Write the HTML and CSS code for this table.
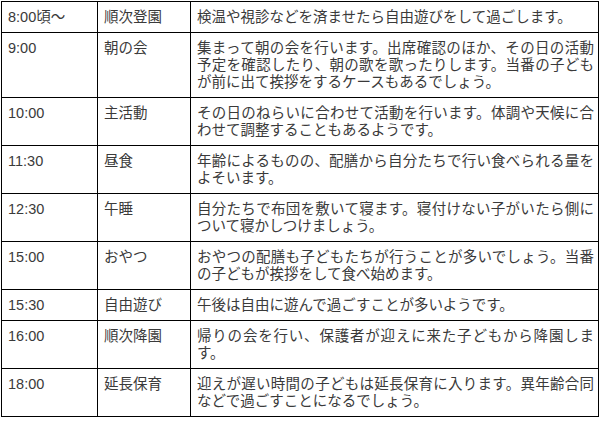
FILE: index.html
```html
<!DOCTYPE html>
<html lang="ja">
<head>
<meta charset="utf-8">
<link rel="stylesheet" href="styles.css">
</head>
<body>
<table class="schedule">
  <colgroup>
    <col class="c-time">
    <col class="c-name">
    <col class="c-desc">
  </colgroup>
  <tr><td>8:00頃〜</td><td>順次登園</td><td class="desc">検温や視診などを済ませたら自由遊びをして過ごします。</td></tr>
  <tr><td>9:00</td><td>朝の会</td><td class="desc">集まって朝の会を行います。出席確認のほか、その日の活動予定を確認したり、朝の歌を歌ったりします。当番の子どもが前に出て挨拶をするケースもあるでしょう。</td></tr>
  <tr><td>10:00</td><td>主活動</td><td class="desc">その日のねらいに合わせて活動を行います。体調や天候に合わせて調整することもあるようです。</td></tr>
  <tr><td>11:30</td><td>昼食</td><td class="desc">年齢によるものの、配膳から自分たちで行い食べられる量をよそいます。</td></tr>
  <tr><td>12:30</td><td>午睡</td><td class="desc">自分たちで布団を敷いて寝ます。寝付けない子がいたら側について寝かしつけましょう。</td></tr>
  <tr><td>15:00</td><td>おやつ</td><td class="desc">おやつの配膳も子どもたちが行うことが多いでしょう。当番の子どもが挨拶をして食べ始めます。</td></tr>
  <tr><td>15:30</td><td>自由遊び</td><td class="desc">午後は自由に遊んで過ごすことが多いようです。</td></tr>
  <tr><td>16:00</td><td>順次降園</td><td class="desc">帰りの会を行い、保護者が迎えに来た子どもから降園します。</td></tr>
  <tr><td>18:00</td><td>延長保育</td><td class="desc">迎えが遅い時間の子どもは延長保育に入ります。異年齢合同などで過ごすことになるでしょう。</td></tr>
</table>
</body>
</html>
```

FILE: styles.css
```css
html, body {
  margin: 0;
  padding: 0;
  background: #fff;
}
body {
  padding: 1px 0 0 1px;
  font-family: "Liberation Sans", "Noto Sans CJK JP", sans-serif;
  font-size: 14.5px;
  line-height: 17px;
  color: #3a3a3a;
}
.schedule {
  border-collapse: collapse;
  table-layout: fixed;
  width: 597px;
}
.c-time { width: 96px; }
.c-name { width: 93px; }
.c-desc { width: 408px; }
.schedule td {
  border: 1px solid #000;
  padding: 7px 4px 6px 6px;
  vertical-align: top;
  word-break: normal;
}
.schedule td.desc {
  text-align: justify;
}
```
